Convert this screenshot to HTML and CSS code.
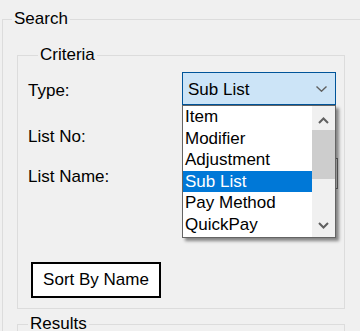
FILE: index.html
```html
<!DOCTYPE html>
<html lang="en">

<head>
    <meta charset="UTF-8">
    <meta name="viewport" content="width=device-width, initial-scale=1.0">
    <title>Search</title>
    <link rel="stylesheet" href="styles.css">
</head>

<body>
    <fieldset class="group search">
        <legend>Search</legend>

        <fieldset class="group criteria">
            <legend>Criteria</legend>

            <div class="field type-row">
                <label class="field-label">Type:</label>
                <div class="combo">
                    <div class="combo-box">
                        <span>Sub List</span>
                        <svg class="combo-arrow" width="11" height="6" viewBox="0 0 11 6">
                            <path d="M0.5 0.5 L5.5 5.2 L10.5 0.5" />
                        </svg>
                    </div>
                    <!-- open dropdown list -->
                    <div class="dropdown">
                        <ul class="options">
                            <li>Item</li>
                            <li>Modifier</li>
                            <li>Adjustment</li>
                            <li class="selected">Sub List</li>
                            <li>Pay Method</li>
                            <li>QuickPay</li>
                        </ul>
                        <div class="scrollbar">
                            <div class="scroll-btn up">
                                <svg width="11" height="7" viewBox="0 0 11 7">
                                    <path d="M1 6 L5.5 1.5 L10 6" />
                                </svg>
                            </div>
                            <div class="thumb"></div>
                            <div class="scroll-btn down">
                                <svg width="11" height="7" viewBox="0 0 11 7">
                                    <path d="M1 1 L5.5 5.5 L10 1" />
                                </svg>
                            </div>
                        </div>
                    </div>
                </div>
            </div>

            <div class="field list-no">
                <label class="field-label">List No:</label>
            </div>

            <div class="field list-name">
                <label class="field-label">List Name:</label>
                <div class="textbox"></div>
            </div>

            <button class="sort-btn">Sort By Name</button>
        </fieldset>

        <fieldset class="group results">
            <legend>Results</legend>
        </fieldset>
    </fieldset>
</body>

</html>
```

FILE: styles.css
```css
html,
body {
    margin: 0;
    width: 360px;
    height: 331px;
    overflow: hidden;
    background: #f0f0f0;
}

body {
    font-family: "Liberation Sans", Arial, sans-serif;
    font-size: 17px;
    color: #000;
}

.group {
    box-sizing: border-box;
    border: 1px solid #dcdcdc;
    margin: 0;
    padding: 0;
    min-width: 0;
}

.group > legend {
    padding: 0 2px;
    margin-left: 10px;
    line-height: 20px;
}

.search {
    margin: 9px 0 0 2px;
    width: 420px;
    height: 400px;
}

.search > legend {
    margin-left: 9px;
}

.criteria {
    margin: 16px 0 0 14px;
    padding-left: 10px;
    width: 328px;
    height: 264px;
}

.results {
    margin: 5px 0 0 14px;
    width: 328px;
    height: 100px;
}

.field {
    display: flex;
    align-items: flex-start;
}

.field-label {
    width: 154px;
    padding-top: 9px;
    line-height: 20px;
}

.type-row {
    margin-top: 7px;
}

.list-no {
    margin-top: 22px;
}

.list-no .field-label {
    padding-top: 0;
}

.list-name {
    margin-top: 11px;
}

.textbox {
    box-sizing: border-box;
    width: 156px;
    height: 31px;
    background: #fff;
    border: 1px solid #7a7a7a;
}

.combo {
    position: relative;
    z-index: 2;
}

.combo-box {
    box-sizing: border-box;
    width: 154px;
    height: 33px;
    display: flex;
    align-items: center;
    padding: 3px 8px 0 5px;
    background: #cce4f7;
    border: 1px solid #005499;
}

.combo-arrow {
    margin-left: auto;
    margin-top: -2px;
}

.combo-arrow path,
.scroll-btn path {
    fill: none;
    stroke: #606060;
    stroke-width: 1.4;
}

.scroll-btn path {
    stroke-width: 2;
}

.dropdown {
    position: absolute;
    top: 33px;
    left: 0;
    box-sizing: border-box;
    width: 154px;
    height: 133px;
    display: flex;
    background: #fff;
    border: 1px solid #646464;
    box-shadow: 3px 3px 3px rgba(0, 0, 0, 0.45);
}

.options {
    list-style: none;
    margin: 0;
    padding: 0;
    width: 129px;
}

.options li {
    height: 21.6px;
    line-height: 21.6px;
    padding-left: 2px;
    white-space: nowrap;
}

.options li.selected {
    background: #0078d7;
    color: #fff;
}

.scrollbar {
    flex: 1;
    display: flex;
    flex-direction: column;
    background: #f0f0f0;
}

.scroll-btn {
    height: 24px;
    display: flex;
    justify-content: center;
    align-items: center;
}

.scroll-btn.up {
    padding-top: 4px;
    height: 20px;
}

.thumb {
    height: 49px;
    background: #cdcdcd;
}

.scroll-btn.down {
    margin-top: auto;
}

.sort-btn {
    display: flex;
    justify-content: center;
    align-items: center;
    box-sizing: border-box;
    width: 130px;
    height: 36px;
    margin: 73px 0 0 3px;
    padding: 0;
    background: #fff;
    border: 2px solid #000;
    font: inherit;
    color: #000;
}
```
